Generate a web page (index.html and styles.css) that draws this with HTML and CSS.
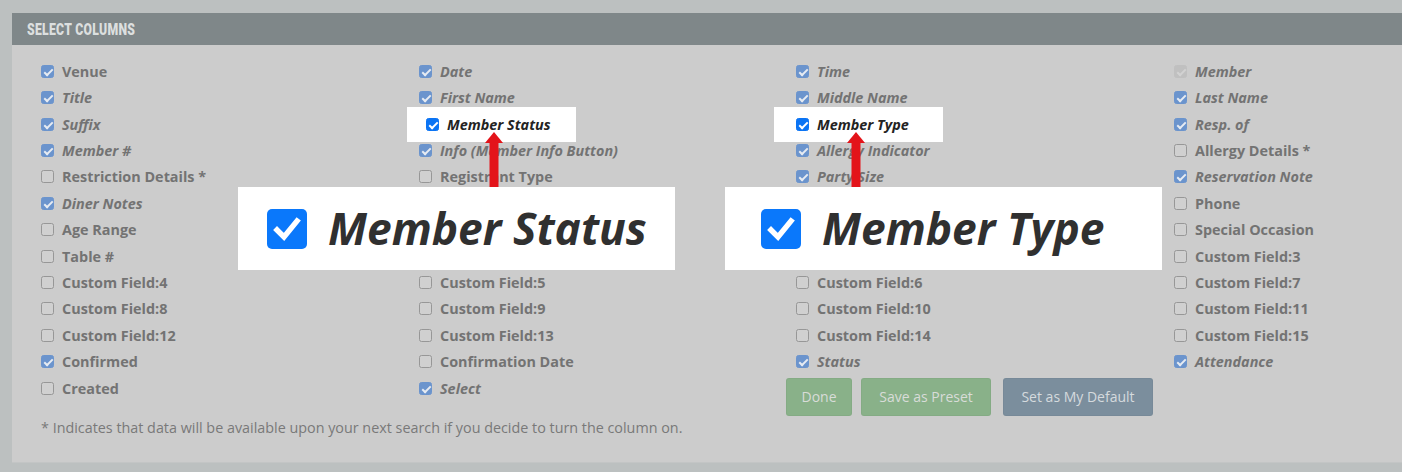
FILE: index.html
```html
<!DOCTYPE html>
<html>
<head>
<meta charset="utf-8">
<link rel="stylesheet" href="styles.css">
</head>
<body>
<div class="panel">
  <div class="panel-head"><span class="title">SELECT COLUMNS</span></div>
  <div class="panel-body">
    <div class="grid">
      <div class="col">
        <label class="row"><span class="cb on"></span><span class="lbl">Venue</span></label>
        <label class="row"><span class="cb on"></span><span class="lbl it">Title</span></label>
        <label class="row"><span class="cb on"></span><span class="lbl it">Suffix</span></label>
        <label class="row"><span class="cb on"></span><span class="lbl it">Member #</span></label>
        <label class="row"><span class="cb"></span><span class="lbl">Restriction Details *</span></label>
        <label class="row"><span class="cb on"></span><span class="lbl it">Diner Notes</span></label>
        <label class="row"><span class="cb"></span><span class="lbl">Age Range</span></label>
        <label class="row"><span class="cb"></span><span class="lbl">Table #</span></label>
        <label class="row"><span class="cb"></span><span class="lbl">Custom Field:4</span></label>
        <label class="row"><span class="cb"></span><span class="lbl">Custom Field:8</span></label>
        <label class="row"><span class="cb"></span><span class="lbl">Custom Field:12</span></label>
        <label class="row"><span class="cb on"></span><span class="lbl">Confirmed</span></label>
        <label class="row"><span class="cb"></span><span class="lbl">Created</span></label>
      </div>
      <div class="col">
        <label class="row"><span class="cb on"></span><span class="lbl it">Date</span></label>
        <label class="row"><span class="cb on"></span><span class="lbl it">First Name</span></label>
        <label class="row hl hl-a"><span class="cb hot"></span><span class="lbl it dark">Member Status</span></label>
        <label class="row"><span class="cb on"></span><span class="lbl it">Info (Member Info Button)</span></label>
        <label class="row"><span class="cb"></span><span class="lbl">Registrant Type</span></label>
        <label class="row"><span class="cb"></span><span class="lbl">Email</span></label>
        <label class="row"><span class="cb"></span><span class="lbl">Custom Field:1</span></label>
        <label class="row"><span class="cb"></span><span class="lbl">Custom Field:2</span></label>
        <label class="row"><span class="cb"></span><span class="lbl">Custom Field:5</span></label>
        <label class="row"><span class="cb"></span><span class="lbl">Custom Field:9</span></label>
        <label class="row"><span class="cb"></span><span class="lbl">Custom Field:13</span></label>
        <label class="row"><span class="cb"></span><span class="lbl">Confirmation Date</span></label>
        <label class="row"><span class="cb on"></span><span class="lbl it">Select</span></label>
      </div>
      <div class="col">
        <label class="row"><span class="cb on"></span><span class="lbl it">Time</span></label>
        <label class="row"><span class="cb on"></span><span class="lbl it">Middle Name</span></label>
        <label class="row hl hl-b"><span class="cb hot"></span><span class="lbl it dark">Member Type</span></label>
        <label class="row"><span class="cb on"></span><span class="lbl it">Allergy Indicator</span></label>
        <label class="row"><span class="cb on"></span><span class="lbl it">Party Size</span></label>
        <label class="row"><span class="cb"></span><span class="lbl">Mobile</span></label>
        <label class="row"><span class="cb"></span><span class="lbl">Server</span></label>
        <label class="row"><span class="cb"></span><span class="lbl">Custom Field:2</span></label>
        <label class="row"><span class="cb"></span><span class="lbl">Custom Field:6</span></label>
        <label class="row"><span class="cb"></span><span class="lbl">Custom Field:10</span></label>
        <label class="row"><span class="cb"></span><span class="lbl">Custom Field:14</span></label>
        <label class="row"><span class="cb on"></span><span class="lbl it">Status</span></label>
        <div class="actions">
          <button class="btn green">Done</button>
          <button class="btn green">Save as Preset</button>
          <button class="btn slate">Set as My Default</button>
        </div>
      </div>
      <div class="col">
        <label class="row"><span class="cb dis"></span><span class="lbl it">Member</span></label>
        <label class="row"><span class="cb on"></span><span class="lbl it">Last Name</span></label>
        <label class="row"><span class="cb on"></span><span class="lbl it">Resp. of</span></label>
        <label class="row"><span class="cb"></span><span class="lbl">Allergy Details *</span></label>
        <label class="row"><span class="cb on"></span><span class="lbl it">Reservation Note</span></label>
        <label class="row"><span class="cb"></span><span class="lbl">Phone</span></label>
        <label class="row"><span class="cb"></span><span class="lbl">Special Occasion</span></label>
        <label class="row"><span class="cb"></span><span class="lbl">Custom Field:3</span></label>
        <label class="row"><span class="cb"></span><span class="lbl">Custom Field:7</span></label>
        <label class="row"><span class="cb"></span><span class="lbl">Custom Field:11</span></label>
        <label class="row"><span class="cb"></span><span class="lbl">Custom Field:15</span></label>
        <label class="row"><span class="cb on"></span><span class="lbl it">Attendance</span></label>
      </div>
    </div>
    <p class="note">* Indicates that data will be available upon your next search if you decide to turn the column on.</p>
  </div>

  <div class="callout callout-a">
    <span class="bigcb"><svg viewBox="0 0 40 40" width="40" height="40"><path d="M10 21 L17 28 L30 12" fill="none" stroke="#fff" stroke-width="5.5" stroke-linecap="square" stroke-linejoin="miter"/></svg></span>
    <span class="bigtxt">Member Status</span>
  </div>
  <div class="callout callout-b">
    <span class="bigcb"><svg viewBox="0 0 40 40" width="40" height="40"><path d="M10 21 L17 28 L30 12" fill="none" stroke="#fff" stroke-width="5.5" stroke-linecap="square" stroke-linejoin="miter"/></svg></span>
    <span class="bigtxt">Member Type</span>
  </div>
  <svg class="arrow arrow-a" viewBox="0 0 18 55" width="18" height="55"><polygon points="0,11 9,0 18,11" fill="#e3141a"/><rect x="4.5" y="10" width="9" height="45" fill="#e3141a"/></svg>
  <svg class="arrow arrow-b" viewBox="0 0 18 55" width="18" height="55"><polygon points="0,11 9,0 18,11" fill="#e3141a"/><rect x="4.5" y="10" width="9" height="45" fill="#e3141a"/></svg>
</div>
</body>
</html>
```

FILE: styles.css
```css
* { box-sizing: border-box; }
html, body { margin: 0; padding: 0; }
body {
  background: #bcc0c0;
  font-family: "Open Sans", Roboto, sans-serif;
  width: 1402px;
  height: 472px;
  overflow: hidden;
}
.panel {
  position: relative;
  margin: 13px 0 0 12px;
  background: #cccccc;
  border-bottom: 1px solid #c3c5c5;
}
.panel-head {
  height: 32px;
  background: #7f8789;
  padding-left: 15px;
  display: flex;
  align-items: center;
}
.title {
  display: inline-block;
  color: #dcdfdf;
  font-family: Roboto, sans-serif;
  font-weight: 900;
  font-size: 16.5px;
  letter-spacing: 0.4px;
  transform: scaleX(0.74);
  transform-origin: left center;
  white-space: nowrap;
}
.panel-body {
  padding: 13px 0 24px 29px;
}
.grid {
  display: grid;
  grid-template-columns: 378px 377px 378px 200px;
}
.col {
  display: flex;
  flex-direction: column;
}
.row {
  display: flex;
  align-items: center;
  gap: 8px;
  height: 26.42px;
  font-size: 14.4px;
  font-weight: 700;
  color: #737373;
  white-space: nowrap;
}
.lbl.it { font-style: italic; }
.lbl.dark { color: #232323; }
.cb {
  position: relative;
  flex: none;
  width: 13px;
  height: 13px;
  border-radius: 2.5px;
  border: 1px solid #979797;
  background: #d0d0d0;
}
.cb.on {
  background: #6b94cd;
  border-color: #6b94cd;
}
.cb.hot {
  background: #0b74f4;
  border-color: #0b74f4;
}
.cb.dis {
  background: #c0c0c0;
  border-color: #c0c0c0;
}
.cb.on::after, .cb.hot::after, .cb.dis::after {
  content: "";
  position: absolute;
  left: 3.5px;
  top: 1px;
  width: 3px;
  height: 7px;
  border: solid #e6ebf2;
  border-width: 0 2px 2px 0;
  transform: rotate(45deg);
}
.cb.hot::after { border-color: #fff; }
.cb.dis::after { border-color: #d2d2d2; }
.row.hl {
  background: #fff;
  width: 169px;
  height: 35px;
  margin: -4.3px 0;
  position: relative;
  z-index: 1;
}
.row.hl-a { margin-left: -12px; padding-left: 19px; }
.row.hl-b { margin-left: -22px; padding-left: 22px; }
.actions {
  display: flex;
  margin: 3px 0 0 -10px;
}
.btn {
  height: 38px;
  border: 1px solid rgba(0,0,0,0.03);
  border-radius: 3px;
  font-family: "Open Sans", Roboto, sans-serif;
  font-size: 14px;
  color: #d8dcd8;
  padding: 0;
}
.btn.green { background: #89b189; }
.btn.slate { background: #7b8e9d; color: #d5dade; }
.actions .btn:nth-child(1) { width: 66px; margin-right: 9px; }
.actions .btn:nth-child(2) { width: 130px; margin-right: 12px; }
.actions .btn:nth-child(3) { width: 150px; }
.note {
  margin: 2px 0 0;
  font-size: 14.35px;
  line-height: 20px;
  color: #797979;
}
.callout {
  position: absolute;
  top: 174px;
  width: 437px;
  height: 83px;
  background: #fff;
  display: flex;
  align-items: center;
  z-index: 3;
}
.callout-a { left: 226px; padding-left: 29px; }
.callout-b { left: 713px; padding-left: 36px; }
.bigcb {
  flex: none;
  width: 40px;
  height: 40px;
  border-radius: 5px;
  background: #0a78fb;
  display: flex;
  margin-right: 21px;
}
.bigtxt {
  font-size: 44.3px;
  font-weight: 700;
  font-style: italic;
  color: #303030;
  white-space: nowrap;
  line-height: 1;
}
.arrow {
  position: absolute;
  top: 119px;
  z-index: 2;
}
.arrow-a { left: 473px; }
.arrow-b { left: 835px; }
```
